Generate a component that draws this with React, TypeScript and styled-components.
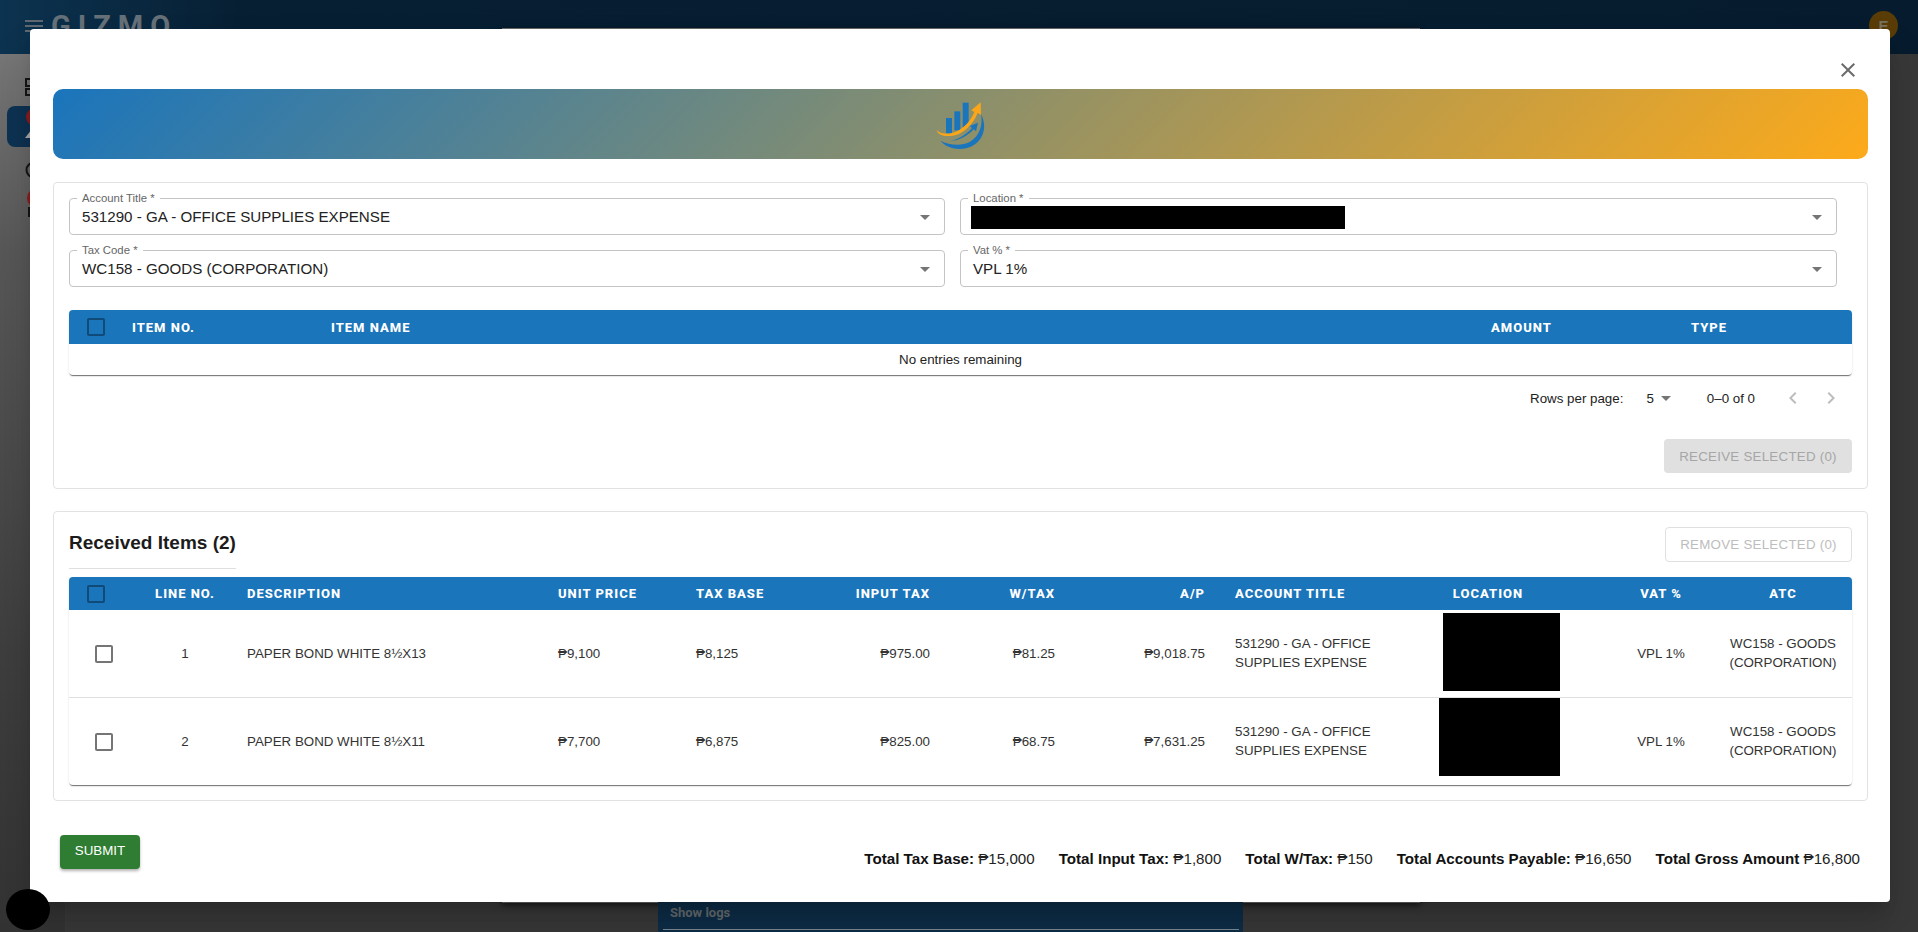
import React from "react";
import styled, { createGlobalStyle } from "styled-components";

const GlobalStyle = createGlobalStyle`
  html, body {
    margin: 0;
    padding: 0;
    height: 100%;
    overflow: hidden;
    background: #383838;
    font-family: "Liberation Sans", Roboto, sans-serif;
  }
  * { box-sizing: border-box; }
`;

const ArrowDrop = () => (
  <svg width="24" height="24" viewBox="0 0 24 24" fill="#757575">
    <path d="M7 10l5 5 5-5z" />
  </svg>
);

const CheckOutline: React.FC<{ color: string }> = ({ color }) => (
  <svg width="24" height="24" viewBox="0 0 24 24" fill={color}>
    <path d="M19 5v14H5V5h14m0-2H5c-1.1 0-2 .9-2 2v14c0 1.1.9 2 2 2h14c1.1 0 2-.9 2-2V5c0-1.1-.9-2-2-2z" />
  </svg>
);

const Logo = () => (
  <svg width="80" height="65" viewBox="0 0 240 195">
    <g fill="#1b75bc">
      <rect x="75" y="78" width="18" height="47" />
      <rect x="100" y="58" width="18" height="57" />
      <rect x="125" y="32" width="18" height="73" />
      <path d="M58 146 C 80 172 125 180 160 158 C 190 138 198 100 180 66 C 186 100 176 132 146 150 C 118 164 84 158 58 146 Z" />
      <path d="M86 148 C 112 142 136 128 153 108 L 146 102 L 171 92 L 165 118 L 158 112 C 140 132 114 146 86 148 Z" />
    </g>
    <path
      fill="#faa61a"
      d="M47 114 C 54 124 74 128 96 122 C 124 114 148 90 160 60 L 151 55 L 179 31 L 180 68 L 170 63 C 156 98 128 126 96 131 C 72 135 50 130 47 114 Z"
    />
  </svg>
);

const rows = [
  {
    line: 1,
    desc: "PAPER BOND WHITE 8½X13",
    unit: "₱9,100",
    base: "₱8,125",
    input: "₱975.00",
    wtax: "₱81.25",
    ap: "₱9,018.75",
    left: 67,
    width: 117,
    top: 3,
  },
  {
    line: 2,
    desc: "PAPER BOND WHITE 8½X11",
    unit: "₱7,700",
    base: "₱6,875",
    input: "₱825.00",
    wtax: "₱68.75",
    ap: "₱7,631.25",
    left: 63,
    width: 121,
    top: 0,
  },
];

const totals = [
  { label: "Total Tax Base:", value: "₱15,000" },
  { label: "Total Input Tax:", value: "₱1,800" },
  { label: "Total W/Tax:", value: "₱150" },
  { label: "Total Accounts Payable:", value: "₱16,650" },
  { label: "Total Gross Amount", value: "₱16,800" },
];

const itemCols = [47, 199, 1160, 200, 177];
const receivedCols = [70, 92, 311, 138, 135, 131, 125, 150, 155, 224, 122, 130];

export default function App() {
  return (
    <Page>
      <GlobalStyle />
      <TopBar>
        <MenuLines>
          <span />
          <span />
          <span />
        </MenuLines>
        <Brand>GIZMO</Brand>
        <Avatar>E</Avatar>
      </TopBar>
      <Body>
        <Sidebar>
          <SideIcon>
            <svg width="18" height="18" viewBox="0 0 18 18" fill="none" stroke="#151515" strokeWidth="2">
              <rect x="1" y="1" width="7" height="7" />
              <rect x="1" y="11" width="7" height="6" />
              <rect x="11" y="1" width="6" height="16" />
            </svg>
          </SideIcon>
          <ActivePill>
            <svg width="24" height="32" viewBox="0 0 24 32">
              <circle cx="12" cy="9" r="9" fill="#8b1c1c" />
              <path d="M2 30 L12 17 L22 30 Z" fill="#a9a9a9" />
            </svg>
          </ActivePill>
          <SideIcon>
            <svg width="18" height="18" viewBox="0 0 18 18" fill="none" stroke="#151515" strokeWidth="2">
              <circle cx="9" cy="9" r="7.5" />
            </svg>
          </SideIcon>
          <SideIcon $shift={-4}>
            <svg width="24" height="30" viewBox="0 0 24 30">
              <circle cx="12" cy="9" r="10" fill="#8b1c1c" />
              <path d="M4 18 V27 H22" fill="none" stroke="#151515" strokeWidth="2" />
            </svg>
          </SideIcon>
        </Sidebar>
        <BackPanel>
          <LogsBar>
            <LogsTitle>Show logs</LogsTitle>
          </LogsBar>
        </BackPanel>
      </Body>

      <Modal>
        <CloseRow>
          <CloseButton aria-label="close">
            <svg width="24" height="24" viewBox="0 0 24 24" fill="#6b6b6b">
              <path d="M19 6.41 17.59 5 12 10.59 6.41 5 5 6.41 10.59 12 5 17.59 6.41 19 12 13.41 17.59 19 19 17.59 13.41 12z" />
            </svg>
          </CloseButton>
        </CloseRow>
        <Banner>
          <Logo />
        </Banner>

        <Card $height={307} $gap={23}>
          <FieldGrid>
            <Field>
              <FieldLabel>Account Title *</FieldLabel>
              <FieldValue>531290 - GA - OFFICE SUPPLIES EXPENSE</FieldValue>
              <ArrowDrop />
            </Field>
            <Field>
              <FieldLabel>Location *</FieldLabel>
              <FieldRedaction />
              <ArrowDrop />
            </Field>
            <Field>
              <FieldLabel>Tax Code *</FieldLabel>
              <FieldValue>WC158 - GOODS (CORPORATION)</FieldValue>
              <ArrowDrop />
            </Field>
            <Field>
              <FieldLabel>Vat % *</FieldLabel>
              <FieldValue>VPL 1%</FieldValue>
              <ArrowDrop />
            </Field>
          </FieldGrid>

          <TablePaper $top={23}>
            <DataTable>
              <colgroup>
                {itemCols.map((w, i) => (
                  <Col key={i} $w={w} />
                ))}
              </colgroup>
              <thead>
                <HeadRow $h={34}>
                  <Th $pad="0 0 0 15px">
                    <CheckOutline color="#0f4a78" />
                  </Th>
                  <Th>ITEM NO.</Th>
                  <Th>ITEM NAME</Th>
                  <Th>AMOUNT</Th>
                  <Th>TYPE</Th>
                </HeadRow>
              </thead>
              <tbody>
                <tr>
                  <EmptyCell colSpan={5}>No entries remaining</EmptyCell>
                </tr>
              </tbody>
            </DataTable>
          </TablePaper>

          <Pagination>
            <span>Rows per page:</span>
            <PageSize>
              5
              <ArrowDrop />
            </PageSize>
            <PageCount>0–0 of 0</PageCount>
            <PageArrow $gap={26}>
              <svg width="24" height="24" viewBox="0 0 24 24" fill="#bdbdbd">
                <path d="M15.41 16.59 10.83 12l4.58-4.59L14 6l-6 6 6 6z" />
              </svg>
            </PageArrow>
            <PageArrow $gap={14}>
              <svg width="24" height="24" viewBox="0 0 24 24" fill="#bdbdbd">
                <path d="M8.59 16.59 13.17 12 8.59 7.41 10 6l6 6-6 6z" />
              </svg>
            </PageArrow>
          </Pagination>

          <ActionRow>
            <ReceiveButton disabled>RECEIVE SELECTED (0)</ReceiveButton>
          </ActionRow>
        </Card>

        <Card $height={290} $gap={22}>
          <ReceivedHead>
            <ReceivedTitle>Received Items (2)</ReceivedTitle>
            <RemoveButton disabled>REMOVE SELECTED (0)</RemoveButton>
          </ReceivedHead>

          <TablePaper $top={8}>
            <DataTable>
              <colgroup>
                {receivedCols.map((w, i) => (
                  <Col key={i} $w={w} />
                ))}
              </colgroup>
              <thead>
                <HeadRow $h={33}>
                  <Th $pad="0 0 0 15px">
                    <CheckOutline color="#0f4a78" />
                  </Th>
                  <Th $align="center">LINE NO.</Th>
                  <Th>DESCRIPTION</Th>
                  <Th>UNIT PRICE</Th>
                  <Th>TAX BASE</Th>
                  <Th $align="right">INPUT TAX</Th>
                  <Th $align="right">W/TAX</Th>
                  <Th $align="right">A/P</Th>
                  <Th $pad="0 0 0 14px">ACCOUNT TITLE</Th>
                  <Th $align="center">LOCATION</Th>
                  <Th $align="center">VAT %</Th>
                  <Th $align="center" $pad="0 12px 0 4px">ATC</Th>
                </HeadRow>
              </thead>
              <tbody>
                {rows.map((r) => (
                  <BodyRow key={r.line}>
                    <Td $pad="2px 0 0 23px">
                      <CheckOutline color="#757575" />
                    </Td>
                    <Td $align="center">{r.line}</Td>
                    <Td>{r.desc}</Td>
                    <Td>{r.unit}</Td>
                    <Td>{r.base}</Td>
                    <Td $align="right">{r.input}</Td>
                    <Td $align="right">{r.wtax}</Td>
                    <Td $align="right">{r.ap}</Td>
                    <Td $pad="0 4px 0 14px">531290 - GA - OFFICE SUPPLIES EXPENSE</Td>
                    <RedactCell>
                      <RowRedaction $left={r.left} $width={r.width} $top={r.top} />
                    </RedactCell>
                    <Td $align="center">VPL 1%</Td>
                    <Td $align="center" $pad="0 12px 0 4px">WC158 - GOODS (CORPORATION)</Td>
                  </BodyRow>
                ))}
              </tbody>
            </DataTable>
          </TablePaper>
        </Card>

        <Footer>
          <SubmitButton>SUBMIT</SubmitButton>
          <Totals>
            {totals.map((t) => (
              <span key={t.label}>
                <b>{t.label}</b> {t.value}
              </span>
            ))}
          </Totals>
        </Footer>
      </Modal>
      <CornerBlot />
    </Page>
  );
}

const Page = styled.div`
  position: relative;
  width: 100vw;
  height: 100vh;
  display: flex;
  flex-direction: column;
  overflow: hidden;
`;

const TopBar = styled.header`
  height: 54px;
  flex: none;
  display: flex;
  align-items: flex-start;
  padding: 0 20px 0 25px;
  background: linear-gradient(90deg, #0c3350 0, #071f33 240px, #061c2e 100%);
`;

const MenuLines = styled.div`
  width: 18px;
  margin-top: 20px;
  display: flex;
  flex-direction: column;
  gap: 3px;
  span {
    display: block;
    height: 2px;
    background: #5f6870;
  }
`;

const Brand = styled.div`
  margin: 9px 0 0 8px;
  font-family: Roboto, sans-serif;
  font-size: 29px;
  line-height: 34px;
  font-weight: 700;
  letter-spacing: 7px;
  color: #667078;
`;

const Avatar = styled.div`
  margin: 11px 0 0 auto;
  width: 29px;
  height: 29px;
  border-radius: 50%;
  background: #5a3c06;
  color: #77705f;
  font-size: 15px;
  font-weight: 700;
  display: flex;
  align-items: center;
  justify-content: center;
`;

const Body = styled.div`
  flex: 1;
  display: flex;
  min-height: 0;
`;

const Sidebar = styled.aside`
  width: 66px;
  flex: none;
  padding: 24px 0 0 7px;
  display: flex;
  flex-direction: column;
  align-items: flex-start;
  background: linear-gradient(180deg, #767676 0, #575757 200px, #3e3e3e 600px, #333 100%);
  border-right: 1px solid #3a3a3a;
`;

const SideIcon = styled.div<{ $shift?: number }>`
  margin: ${(p) => p.$shift ?? 0}px 0 14px 18px;
  display: flex;
`;

const ActivePill = styled.div`
  width: 58px;
  height: 41px;
  margin: -4px 0 14px;
  padding: 2px 0 0 16px;
  border-radius: 8px;
  background: #0d3252;
`;

const BackPanel = styled.div`
  position: absolute;
  left: 502px;
  top: 28px;
  width: 918px;
  bottom: 29px;
  background: #666;
  box-shadow: 0 2px 6px rgba(0, 0, 0, 0.6);
`;

const LogsBar = styled.div`
  position: absolute;
  left: 156px;
  width: 585px;
  top: 874px;
  height: 30px;
  background: #0d2d47;
  padding: 0 4px 0 5px;
`;

const LogsTitle = styled.div`
  padding-left: 7px;
  height: 28px;
  line-height: 22px;
  font-family: Roboto, sans-serif;
  font-size: 13px;
  font-weight: 700;
  color: #646a6e;
  border-bottom: 1px solid #7d8a94;
`;

const Modal = styled.div`
  position: absolute;
  left: 30px;
  top: 29px;
  width: 1860px;
  height: 873px;
  background: #fff;
  border-radius: 4px;
  padding: 21px 22px 0 23px;
  display: flex;
  flex-direction: column;
  box-shadow: 0 11px 15px -7px rgba(0, 0, 0, 0.2), 0 24px 38px 3px rgba(0, 0, 0, 0.14);
`;

const CloseRow = styled.div`
  height: 39px;
  flex: none;
  display: flex;
  justify-content: flex-end;
`;

const CloseButton = styled.button`
  width: 40px;
  height: 40px;
  padding: 8px;
  border: none;
  background: none;
  display: flex;
`;

const Banner = styled.div`
  height: 70px;
  flex: none;
  border-radius: 10px;
  background: linear-gradient(135deg, #1a75bc 0%, #fdaa1a 100%);
  display: flex;
  align-items: center;
  justify-content: center;
`;

const Card = styled.section<{ $height: number; $gap: number }>`
  margin-top: ${(p) => p.$gap}px;
  flex: none;
  height: ${(p) => p.$height}px;
  padding: 15px;
  border: 1px solid #e2e2e2;
  border-radius: 4px;
`;

const FieldGrid = styled.div`
  display: grid;
  grid-template-columns: 876px 877px;
  column-gap: 15px;
  row-gap: 15px;
`;

const Field = styled.div`
  position: relative;
  height: 37px;
  padding: 0 7px 0 12px;
  border: 1px solid #c4c4c4;
  border-radius: 4px;
  display: flex;
  align-items: center;
  justify-content: space-between;
`;

const FieldLabel = styled.label`
  position: absolute;
  left: 7px;
  top: -7px;
  padding: 0 5px;
  background: #fff;
  font-size: 11.36px;
  line-height: 13px;
  color: #666;
`;

const FieldValue = styled.div`
  font-size: 15.15px;
  color: #222;
`;

const FieldRedaction = styled.div`
  width: 374px;
  height: 23px;
  margin: 1px 0 0 -2px;
  background: #000;
`;

const TablePaper = styled.div<{ $top: number }>`
  margin-top: ${(p) => p.$top}px;
  border-radius: 4px;
  overflow: hidden;
  box-shadow: 0 2px 1px -1px rgba(0, 0, 0, 0.45), 0 1px 1px 0 rgba(0, 0, 0, 0.14), 0 1px 3px 0 rgba(0, 0, 0, 0.08);
`;

const DataTable = styled.table`
  width: 100%;
  table-layout: fixed;
  border-collapse: collapse;
`;

const Col = styled.col<{ $w: number }>`
  width: ${(p) => p.$w}px;
`;

const HeadRow = styled.tr<{ $h: number }>`
  height: ${(p) => p.$h}px;
  background: #1a75bb;
`;

const Th = styled.th<{ $align?: string; $pad?: string }>`
  padding: ${(p) => p.$pad ?? "0 16px"};
  text-align: ${(p) => p.$align ?? "left"};
  font-family: Roboto, sans-serif;
  font-size: 13px;
  font-weight: 800;
  letter-spacing: 1px;
  color: #fff;
  white-space: nowrap;
  svg {
    display: block;
  }
`;

const EmptyCell = styled.td`
  height: 31px;
  text-align: center;
  font-size: 13.33px;
  color: #222;
`;

const BodyRow = styled.tr`
  height: 87px;
  & + & {
    height: 88px;
  }
  & + & td {
    border-top: 1px solid #e0e0e0;
  }
`;

const Td = styled.td<{ $align?: string; $pad?: string }>`
  padding: ${(p) => p.$pad ?? "0 16px"};
  text-align: ${(p) => p.$align ?? "left"};
  font-size: 13.33px;
  line-height: 19px;
  color: #333;
  svg {
    display: block;
  }
`;

const RedactCell = styled.td`
  padding: 0;
  vertical-align: top;
`;

const RowRedaction = styled.div<{ $left: number; $width: number; $top: number }>`
  margin: ${(p) => p.$top}px 0 0 ${(p) => p.$left}px;
  width: ${(p) => p.$width}px;
  height: 78px;
  background: #000;
`;

const Pagination = styled.div`
  height: 46px;
  padding-right: 9px;
  display: flex;
  align-items: center;
  justify-content: flex-end;
  font-size: 13.33px;
  color: #222;
`;

const PageSize = styled.div`
  margin-left: 23px;
  display: flex;
  align-items: center;
`;

const PageCount = styled.span`
  margin-left: 29px;
`;

const PageArrow = styled.span<{ $gap: number }>`
  margin-left: ${(p) => p.$gap}px;
  display: flex;
`;

const ActionRow = styled.div`
  margin-top: 18px;
  display: flex;
  justify-content: flex-end;
`;

const ReceiveButton = styled.button`
  width: 188px;
  height: 34px;
  padding: 0;
  border: none;
  border-radius: 4px;
  background: #e0e0e0;
  color: #a6a6a6;
  font-family: inherit;
  font-size: 13.33px;
  letter-spacing: 0.25px;
`;

const ReceivedHead = styled.div`
  display: flex;
  justify-content: space-between;
  align-items: flex-start;
`;

const ReceivedTitle = styled.h2`
  margin: 0;
  height: 42px;
  padding-top: 3px;
  font-size: 19px;
  line-height: 26px;
  font-weight: 700;
  color: #1c1c1c;
  border-bottom: 1px solid #e0e0e0;
`;

const RemoveButton = styled.button`
  width: 187px;
  height: 35px;
  padding: 0;
  border: 1px solid #e0e0e0;
  border-radius: 4px;
  background: #fff;
  color: #bdbdbd;
  font-family: inherit;
  font-size: 13.33px;
  letter-spacing: 0.25px;
`;

const Footer = styled.div`
  flex: 1;
  display: flex;
  align-items: flex-start;
  justify-content: space-between;
  padding: 34px 8px 0 7px;
`;

const SubmitButton = styled.button`
  width: 80px;
  height: 34px;
  padding: 0 0 4px;
  border: none;
  border-radius: 4px;
  background: #2e7d32;
  color: #fff;
  font-family: inherit;
  font-size: 13.33px;
  box-shadow: 0 2px 3px rgba(0, 0, 0, 0.3);
`;

const Totals = styled.div`
  margin-top: 14px;
  display: flex;
  gap: 24px;
  font-size: 15.15px;
  line-height: 20px;
  color: #222;
  b {
    font-weight: 700;
    color: #111;
  }
`;

const CornerBlot = styled.div`
  position: absolute;
  left: 6px;
  top: 889px;
  width: 44px;
  height: 41px;
  border-radius: 50%;
  background: #000;
`;
